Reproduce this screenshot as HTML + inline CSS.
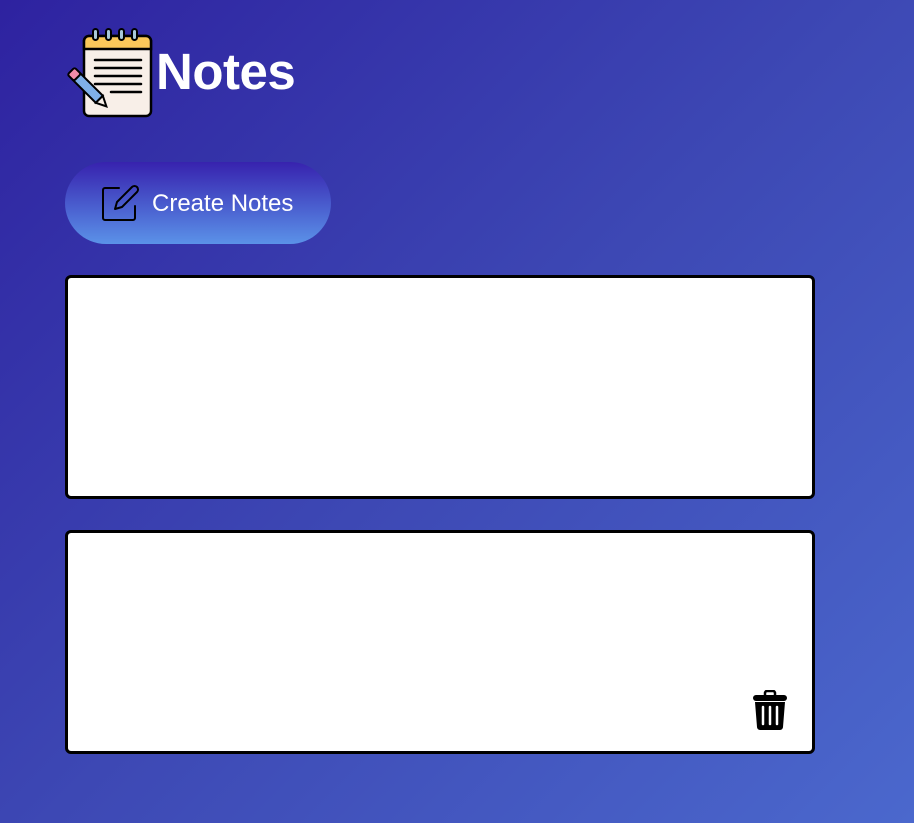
<!DOCTYPE html>
<html><head><meta charset="utf-8"><style>
html,body{margin:0;padding:0}
body{width:914px;height:823px;overflow:hidden;position:relative;background:linear-gradient(135deg,#2e22a0 0%,#3d48b4 50%,#4b68cd 100%);font-family:"Liberation Sans",Arial,sans-serif}
.title{position:absolute;left:156px;top:40px;font-size:51px;font-weight:bold;color:#fff;line-height:64px;margin:0;letter-spacing:-0.5px}
.btn{position:absolute;left:65px;top:162px;width:266px;height:82px;border-radius:41px;background:linear-gradient(180deg,#3722ae 0%,#4a5fcf 55%,#5b92e8 100%)}
.btn span{position:absolute;left:87px;top:28px;color:#fff;font-size:24px;line-height:28px}
.note{position:absolute;left:65px;width:744px;border:3px solid #000;border-radius:6px;background:#fff}
</style></head><body>
<svg style="position:absolute;left:64px;top:24px" width="94" height="98" viewBox="64 24 94 98">
 <rect x="84" y="36" width="67" height="80" rx="5" fill="#f8efe8" stroke="#000" stroke-width="2.5"/>
 <path d="M84 49 V41 a5 5 0 0 1 5 -5 H146 a5 5 0 0 1 5 5 V49 Z" fill="#fbc85a" stroke="#000" stroke-width="2.5"/>
 <g fill="#a9c9d9" stroke="#000" stroke-width="2"><rect x="93" y="29" width="5" height="11" rx="2.5"/><rect x="106" y="29" width="5" height="11" rx="2.5"/><rect x="119" y="29" width="5" height="11" rx="2.5"/><rect x="132" y="29" width="5" height="11" rx="2.5"/></g>
 <g stroke="#000" stroke-width="2.5" stroke-linecap="round"><line x1="95" y1="60" x2="141" y2="60"/><line x1="95" y1="68" x2="141" y2="68"/><line x1="95" y1="76" x2="141" y2="76"/><line x1="95" y1="84" x2="141" y2="84"/><line x1="111" y1="92" x2="141" y2="92"/></g>
 <g transform="rotate(45 88 88)"><rect x="72" y="83" width="32" height="10" fill="#7fb0e8" stroke="#000" stroke-width="2"/><rect x="64" y="83" width="9" height="10" rx="2" fill="#f08ca8" stroke="#000" stroke-width="2"/><path d="M104 83 L114 88 L104 93 Z" fill="#f8efe8" stroke="#000" stroke-width="2"/></g>
</svg>
<h1 class="title">Notes</h1>
<div class="btn">
 <svg style="position:absolute;left:36px;top:22px" width="40" height="40" viewBox="0 0 40 40" fill="none" stroke="#000" stroke-width="2" stroke-linecap="round" stroke-linejoin="round">
  <path d="M18 4 H4 a2 2 0 0 0 -2 2 V34 a2 2 0 0 0 2 2 H32 a2 2 0 0 0 2 -2 V22"/>
  <path d="M31 3 a3 3 0 0 1 5 5 L21 23 L14 25 L16 18 Z"/>
 </svg>
 <span>Create Notes</span>
</div>
<div class="note" style="top:275px;height:218px"></div>
<div class="note" style="top:530px;height:218px">
 <svg style="position:absolute;left:684px;top:157px" width="36" height="40" viewBox="0 0 36 40">
  <path d="M13 6 V3 a2 2 0 0 1 2 -2 H21 a2 2 0 0 1 2 2 V6" fill="none" stroke="#000" stroke-width="2.5"/>
  <rect x="1" y="5" width="34" height="6" rx="3" fill="#000"/>
  <path d="M3 12 H33 L31 37 a3 3 0 0 1 -3 3 H8 a3 3 0 0 1 -3 -3 Z" fill="#000"/>
  <g stroke="#fff" stroke-width="2.5" stroke-linecap="round"><line x1="11" y1="17" x2="11" y2="34"/><line x1="18" y1="17" x2="18" y2="34"/><line x1="25" y1="17" x2="25" y2="34"/></g>
 </svg>
</div>
</body></html>
